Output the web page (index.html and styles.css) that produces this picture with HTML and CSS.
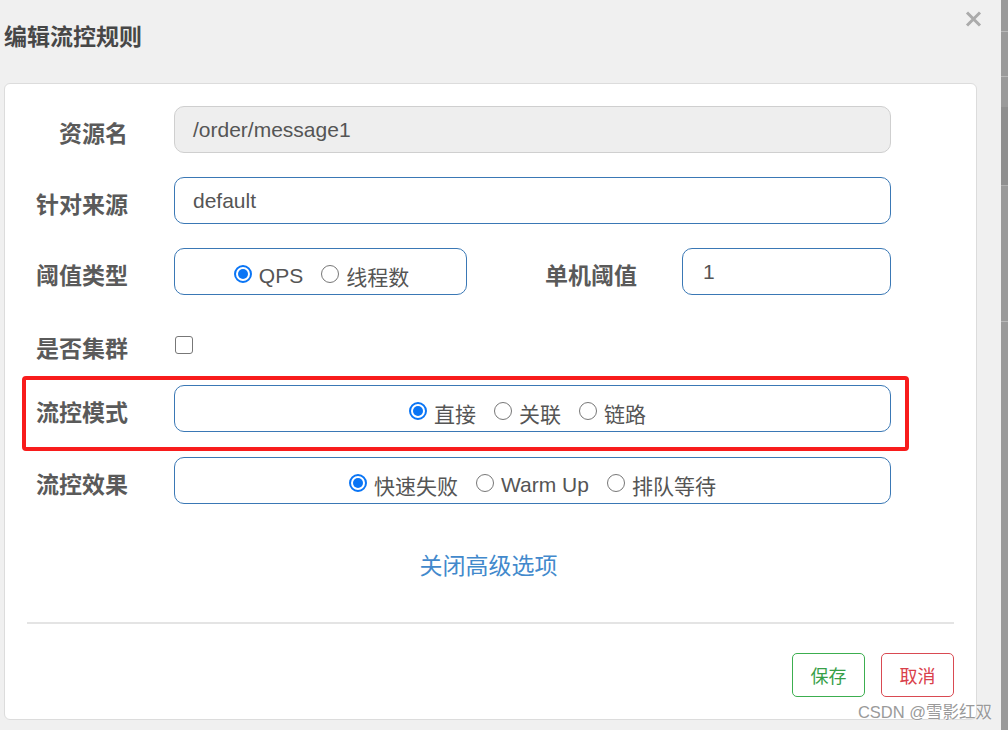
FILE: index.html
```html
<!DOCTYPE html>
<html lang="zh-CN">
<head>
<meta charset="utf-8">
<title>编辑流控规则</title>
<link rel="stylesheet" href="styles.css">
</head>
<body>
<div class="page">
  <div class="dialog">
    <div class="dlg-head">
      <h1 class="dlg-title">编辑流控规则</h1>
      <span class="close" aria-label="close">
        <svg width="17" height="16" viewBox="0 0 17 16"><path d="M2 1.5 L15 14.5 M15 1.5 L2 14.5" stroke="#ababab" stroke-width="3" fill="none"/></svg>
      </span>
    </div>
    <div class="card">
      <div class="form">
        <div class="row">
          <span class="lbl">资源名</span>
          <div class="field input disabled">/order/message1</div>
        </div>
        <div class="row">
          <span class="lbl">针对来源</span>
          <div class="field input">default</div>
        </div>
        <div class="row">
          <span class="lbl">阈值类型</span>
          <div class="radio-box small">
            <span class="opt"><span class="radio checked"></span>QPS</span>
            <span class="opt"><span class="radio"></span>线程数</span>
          </div>
          <span class="lbl2">单机阈值</span>
          <div class="input short">1</div>
        </div>
        <div class="row row-check">
          <span class="lbl">是否集群</span>
          <span class="checkbox"></span>
        </div>
        <div class="row row-mode">
          <span class="lbl">流控模式</span>
          <div class="field radio-box mode-box">
            <span class="opt"><span class="radio checked"></span>直接</span>
            <span class="opt"><span class="radio"></span>关联</span>
            <span class="opt"><span class="radio"></span>链路</span>
          </div>
          <span class="highlight"></span>
        </div>
        <div class="row row-effect">
          <span class="lbl">流控效果</span>
          <div class="field radio-box">
            <span class="opt"><span class="radio checked"></span>快速失败</span>
            <span class="opt"><span class="radio"></span>Warm Up</span>
            <span class="opt"><span class="radio"></span>排队等待</span>
          </div>
        </div>
      </div>
      <div class="adv"><a class="adv-link">关闭高级选项</a></div>
      <div class="sep"></div>
      <div class="actions">
        <span class="btn btn-save">保存</span>
        <span class="btn btn-cancel">取消</span>
      </div>
    </div>
  </div>
  <div class="strip">
    <div class="seg s1"></div>
    <div class="seg s2"></div>
    <div class="seg s3"></div>
    <div class="seg s4"></div>
    <div class="seg s5"></div>
  </div>
  <span class="watermark">CSDN @雪影红双</span>
</div>
</body>
</html>
```

FILE: styles.css
```css
* { box-sizing: border-box; }

html, body {
  margin: 0;
  padding: 0;
  width: 1008px;
  height: 730px;
  overflow: hidden;
  background: #f0f0f0;
  font-family: "Liberation Sans", "Noto Sans CJK SC", sans-serif;
  color: #555;
}

.page {
  position: relative;
  display: flex;
  width: 1008px;
  height: 730px;
}

.dialog {
  width: 1001px;
  height: 730px;
  background: #f0f0f0;
  display: flex;
  flex-direction: column;
}

.dlg-head {
  height: 83px;
  display: flex;
  justify-content: space-between;
  align-items: flex-start;
  padding: 0 19px 0 4px;
}

.dlg-title {
  margin: 19px 0 0 0;
  font-size: 23px;
  line-height: 32px;
  font-weight: bold;
  color: #474747;
  font-family: "Noto Sans CJK SC", sans-serif;
}

.close {
  margin-top: 11px;
  display: block;
  width: 17px;
  height: 16px;
}
.close svg { display: block; }

.card {
  margin-left: 4px;
  width: 973px;
  height: 637px;
  background: #fff;
  border: 1px solid #dcdcdc;
  border-radius: 6px;
  display: flex;
  flex-direction: column;
}

.form {
  padding-top: 22px;
  display: flex;
  flex-direction: column;
  gap: 24px;
}

.row {
  position: relative;
  display: flex;
  align-items: center;
  height: 47px;
}

.lbl {
  width: 123px;
  margin-right: 46px;
  text-align: right;
  font-family: "Noto Sans CJK SC", sans-serif;
  font-weight: bold;
  font-size: 23px;
  color: #5a5a5a;
  padding-top: 4px;
  white-space: nowrap;
}

.lbl2 {
  width: 170px;
  margin-right: 45px;
  text-align: right;
  font-family: "Noto Sans CJK SC", sans-serif;
  font-weight: bold;
  font-size: 23px;
  color: #5a5a5a;
  padding-top: 4px;
}

.field { width: 717px; }

.input {
  height: 47px;
  border: 1px solid #3a78b5;
  border-radius: 10px;
  padding-left: 18px;
  display: flex;
  align-items: center;
  font-size: 21px;
  color: #555;
}

.input.disabled {
  background: #eeeeee;
  border-color: #cfcfcf;
}

.input.short {
  width: 209px;
  padding-left: 20px;
}

.radio-box {
  height: 47px;
  border: 1px solid #3a78b5;
  border-radius: 10px;
  display: flex;
  align-items: center;
  justify-content: center;
  gap: 18px;
  padding-top: 8px;
  font-size: 21px;
  color: #555;
}

.radio-box.small { width: 293px; padding-left: 2px; }
.radio-box.mode-box { padding-right: 10px; }

.opt {
  display: inline-flex;
  align-items: center;
  gap: 7px;
  white-space: nowrap;
}

.radio {
  position: relative;
  display: inline-block;
  width: 18px;
  height: 18px;
  border: 1.5px solid #777;
  border-radius: 50%;
  background: #fff;
  margin-top: -3px;
}

.radio.checked {
  border: 2px solid #0a75f5;
}
.radio.checked::after {
  content: "";
  position: absolute;
  left: 2px;
  top: 2px;
  width: 10px;
  height: 10px;
  border-radius: 50%;
  background: #0a75f5;
}

.row-check {
  height: 42px;
  padding-top: 10px;
}

.checkbox {
  display: inline-block;
  width: 18px;
  height: 18px;
  border: 1.5px solid #777;
  border-radius: 3px;
  margin-left: 1px;
}

.row-effect { margin-top: 1px; }

.highlight {
  position: absolute;
  left: 17px;
  top: -9px;
  width: 887px;
  height: 75px;
  border: 4px solid #f81c1c;
  border-radius: 4px;
  pointer-events: none;
}

.adv {
  margin-top: 44px;
  text-align: center;
  padding-right: 4px;
}

.adv-link {
  font-family: "Noto Sans CJK SC", sans-serif;
  font-size: 23px;
  line-height: 32px;
  color: #4289cc;
  cursor: pointer;
}

.sep {
  margin: 42px 22px 0 22px;
  height: 2px;
  background: #e4e4e4;
}

.actions {
  margin-top: 29px;
  display: flex;
  justify-content: flex-end;
  gap: 16px;
  padding-right: 22px;
}

.btn {
  width: 73px;
  height: 44px;
  display: flex;
  align-items: center;
  justify-content: center;
  border-radius: 5px;
  background: #fff;
  font-family: "Noto Sans CJK SC", sans-serif;
  font-size: 18px;
}

.btn-save { border: 1px solid #3cae4f; color: #37a048; }
.btn-cancel { border: 1px solid #d94a52; color: #d9404a; }

.strip {
  width: 7px;
  height: 730px;
  background: #9a9a9a;
  display: flex;
  flex-direction: column;
  overflow: hidden;
}

.seg { border-bottom: 1px solid #b8b8b8; }
.s1 { height: 32px; }
.s2 { height: 45px; }
.s3 { height: 30px; border-bottom: none; }
.s4 { height: 79px; background: #8f8f8f; border-bottom: 1px solid #b0b0b0; }
.s5 { height: 136px; }

.watermark {
  position: absolute;
  right: 16px;
  bottom: 8px;
  font-size: 16.5px;
  line-height: 20px;
  color: #9a9a9a;
  text-shadow: 0 0 2px #fff, 0 0 1px #fff;
  white-space: nowrap;
}
```
